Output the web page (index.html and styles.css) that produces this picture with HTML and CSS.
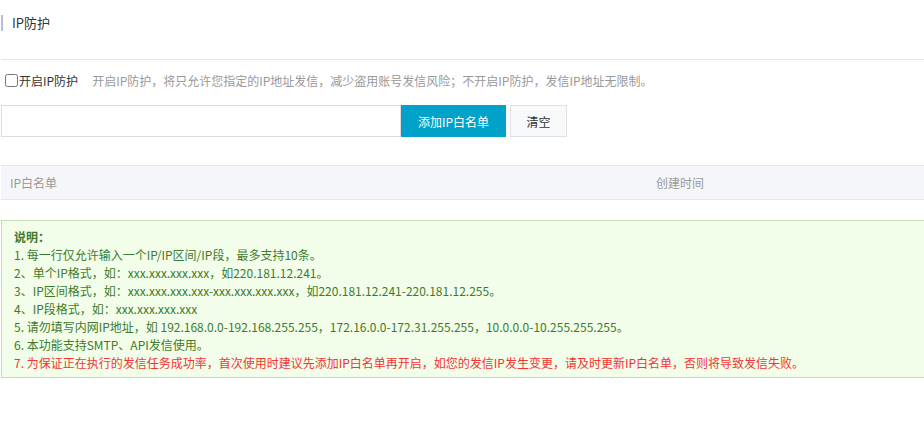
FILE: index.html
```html
<!DOCTYPE html>
<html lang="zh-CN">
<head>
<meta charset="utf-8">
<title>IP防护</title>
<link rel="stylesheet" href="styles.css">
</head>
<body>
<div class="page">
  <div class="title-bar"><span class="title">IP防护</span></div>
  <div class="toggle-row">
    <label class="toggle"><input type="checkbox" class="chk">开启IP防护</label>
    <span class="desc">开启IP防护，将只允许您指定的IP地址发信，减少盗用账号发信风险；不开启IP防护，发信IP地址无限制。</span>
  </div>
  <div class="add-row">
    <input type="text" class="ip-input">
    <button class="btn btn-primary">添加IP白名单</button>
    <button class="btn btn-default">清空</button>
  </div>
  <div class="table-head">
    <div class="col col-ip">IP白名单</div>
    <div class="col col-time">创建时间</div>
  </div>
  <div class="notice">
    <div class="notice-title">说明：</div>
    <div>1. 每一行仅允许输入一个IP/IP区间/IP段，最多支持10条。</div>
    <div>2、单个IP格式，如：xxx.xxx.xxx.xxx，如220.181.12.241。</div>
    <div>3、IP区间格式，如：xxx.xxx.xxx.xxx-xxx.xxx.xxx.xxx，如220.181.12.241-220.181.12.255。</div>
    <div>4、IP段格式，如：xxx.xxx.xxx.xxx</div>
    <div>5. 请勿填写内网IP地址，如 192.168.0.0-192.168.255.255，172.16.0.0-172.31.255.255，10.0.0.0-10.255.255.255。</div>
    <div>6. 本功能支持SMTP、API发信使用。</div>
    <div class="warn">7. 为保证正在执行的发信任务成功率，首次使用时建议先添加IP白名单再开启，如您的发信IP发生变更，请及时更新IP白名单，否则将导致发信失败。</div>
  </div>
</div>
</body>
</html>
```
FILE: styles.css
```css
html, body {
  margin: 0;
  padding: 0;
  overflow-x: hidden;
  background: #fff;
}
body {
  font-family: "Noto Sans CJK SC", "Liberation Sans", sans-serif;
  font-size: 12px;
  color: #333;
}
.page {
  padding-left: 1px;
  margin-right: -12px;
}
.title-bar {
  height: 60px;
  border-bottom: 1px solid #e5e5e5;
  box-sizing: border-box;
  padding-top: 14px;
}
.title {
  display: inline-block;
  border-left: 2px solid #b7bfd8;
  padding-left: 9px;
  height: 16px;
  line-height: 16px;
  font-size: 13px;
  color: #333;
}
.toggle-row {
  display: flex;
  align-items: center;
  height: 20px;
  margin-top: 10px;
}
.toggle {
  display: flex;
  align-items: center;
  color: #333;
  padding-left: 3px;
}
.chk {
  margin: 0 1px 0 1px;
  width: 13px;
  height: 13px;
}
.desc {
  color: #999;
  margin-left: 14px;
}
.add-row {
  display: flex;
  margin-top: 15px;
  height: 32px;
}
.ip-input {
  width: 400px;
  height: 32px;
  box-sizing: border-box;
  border: 1px solid #dcdcdc;
  margin: 0;
  padding: 0 8px;
  outline: none;
}
.btn {
  height: 32px;
  box-sizing: border-box;
  font-family: inherit;
  font-size: 12px;
  cursor: pointer;
  margin: 0;
}
.btn-primary {
  width: 105px;
  background: #00a2ca;
  color: #fff;
  border: 1px solid #00a2ca;
}
.btn-default {
  width: 57px;
  margin-left: 4px;
  background: #f7f9fa;
  color: #333;
  border: 1px solid #dde1e4;
}
.table-head {
  display: flex;
  margin-top: 28px;
  height: 35px;
  box-sizing: border-box;
  background: #f5f6fa;
  border-top: 1px solid #e3e5ea;
  border-bottom: 1px solid #e3e5ea;
  align-items: center;
  color: #999;
}
.col-ip {
  width: 645px;
  padding-left: 9px;
  box-sizing: border-box;
}
.col-time {
  padding-left: 10px;
}
.notice {
  margin-top: 20px;
  background: #f2fee9;
  border: 1px solid #c9dcba;
  padding: 7px 12px 5px;
  line-height: 18px;
  color: #3f7a2d;
}
.notice-title {
  font-weight: bold;
}
.warn {
  color: #f53333;
}
```
